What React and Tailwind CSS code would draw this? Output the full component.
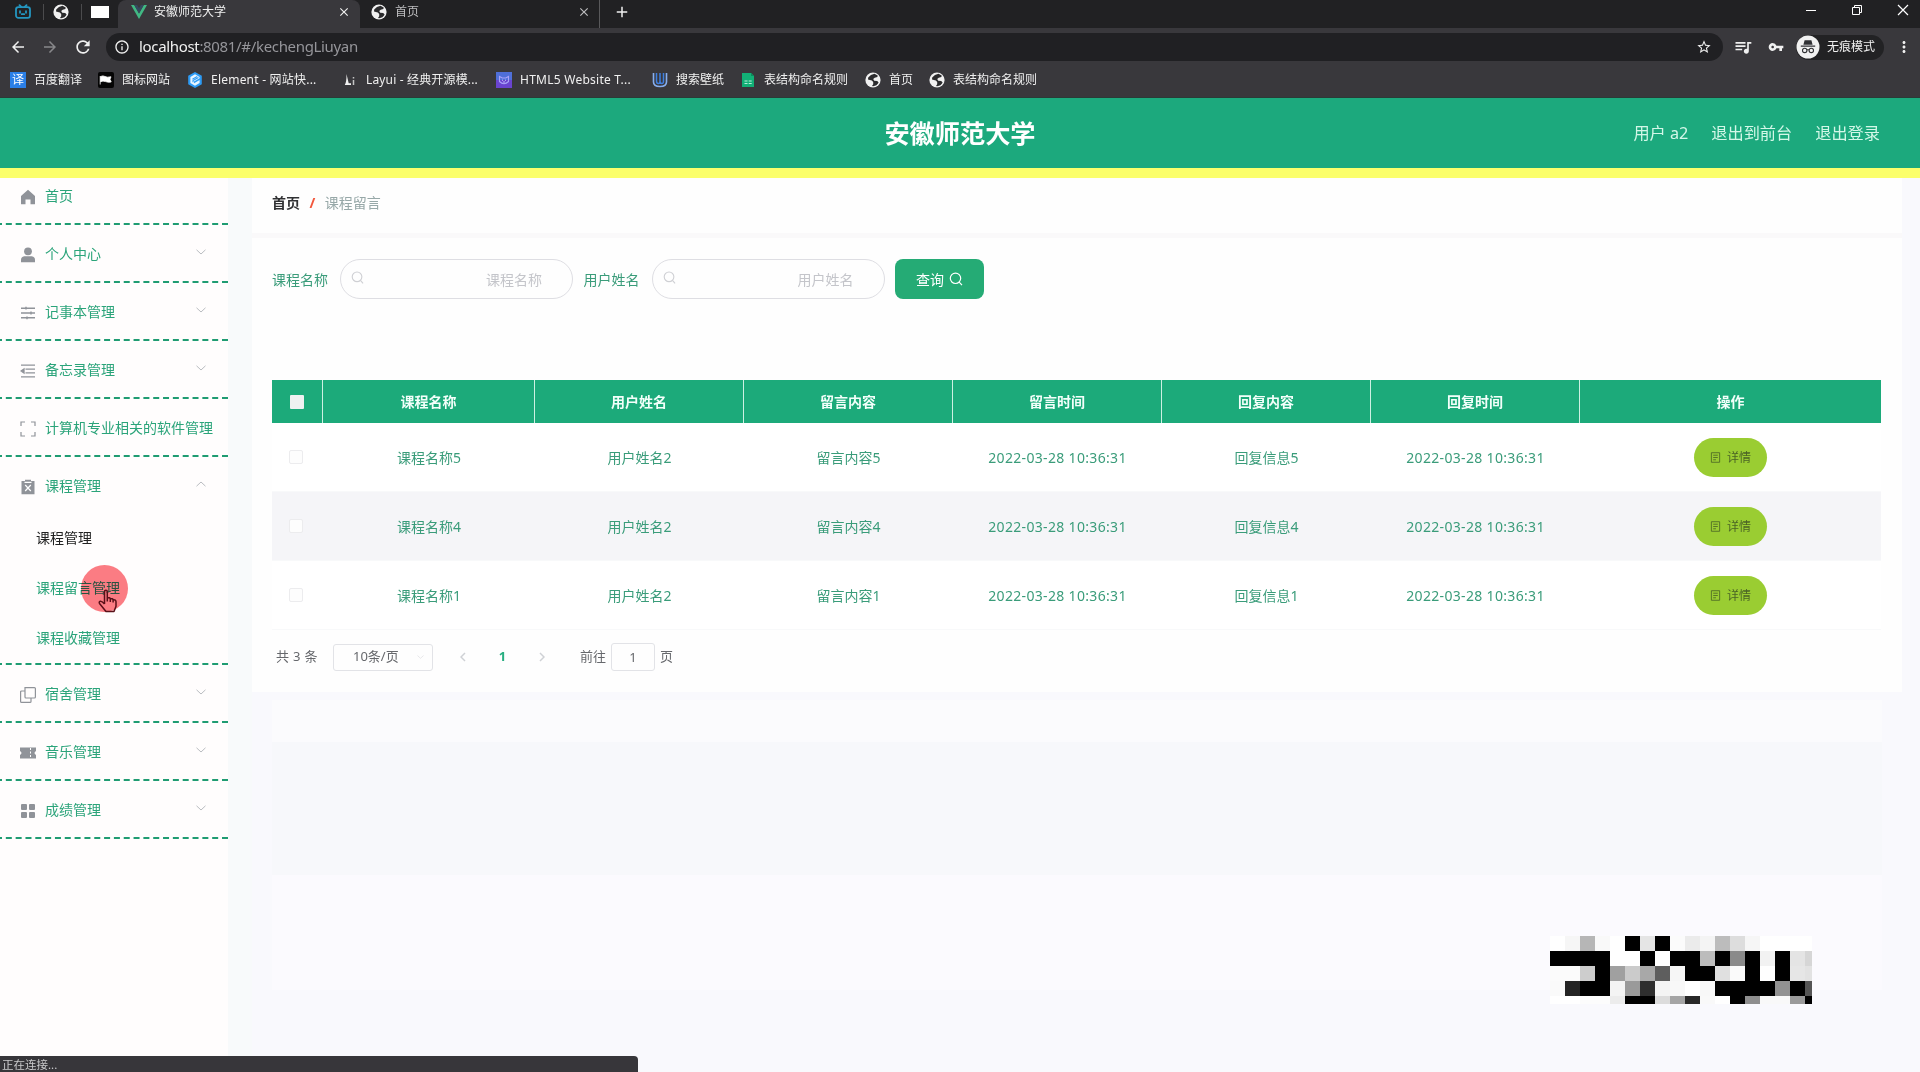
import React from "react";
import {
  MdArrowBack,
  MdArrowForward,
  MdRefresh,
  MdInfoOutline,
  MdStarBorder,
  MdQueueMusic,
  MdVpnKey,
  MdMoreVert,
  MdAdd,
  MdClose,
} from "react-icons/md";

/* ---------- browser icons ---------- */

const Globe = () => (
  <svg viewBox="0 0 16 16" className="size-4 shrink-0">
    <circle cx="8" cy="8" r="7.600" fill="#f1f1f1" />
    <path d="M9.500 1.800Q5.500 2.600 3.200 5.400L3 7.500l3.800.9 1.400 1.600v2.200l-1.200 1.900q4.600.6 6.600-3.500l-1.400-1.700-3-.2-1-1.700 1.500-1.300 2.700-.6.300-1.700z" fill="#2b2b2d" />
  </svg>
);

const Bilibili = () => (
  <svg viewBox="0 0 16 16" className="size-4" fill="none" stroke="#2496c0" strokeWidth="1.8" strokeLinecap="round">
    <path d="M4.500 1.200 6.300 3M11.500 1.200 9.700 3" />
    <rect x="1" y="3.200" width="14" height="10.600" rx="2.400" />
    <path d="M5 7.200v1.600M11 7.200v1.600M6.800 10.200h2.400" />
  </svg>
);

const Vue = () => (
  <svg viewBox="0 0 16 14" className="h-[14px] w-4">
    <path d="M0 0h3.200L8 8.400 12.800 0H16L8 14z" fill="#41b883" />
    <path d="M3.200 0h2.900L8 3.300 9.900 0h2.900L8 8.400z" fill="#35495e" />
  </svg>
);

const Incognito = () => (
  <svg viewBox="0 0 24 24" className="size-6 shrink-0">
    <circle cx="12" cy="12" r="11.500" fill="#f1f1f1" />
    <path d="M8.600 5.300h6.800l1.200 4.400H7.400zM4.800 10.600h14.400v1.100H4.800z" fill="#303134" />
    <circle cx="8.700" cy="15.400" r="2.200" fill="none" stroke="#303134" strokeWidth="1.100" />
    <circle cx="15.300" cy="15.400" r="2.200" fill="none" stroke="#303134" strokeWidth="1.100" />
    <path d="M10.900 15q1.100-.7 2.200 0" fill="none" stroke="#303134" strokeWidth="1" />
  </svg>
);

const FlagMark = () => (
  <svg viewBox="0 0 16 16" className="size-4">
    <rect width="16" height="16" rx="2" fill="#050505" />
    <path d="M2.200 4v8.500M2.600 4.500q2.400-1.200 4.400 0t6 .3l-1 2.500 1.200 2.600q-2.800.8-5.600-.3t-5 .2z" fill="#fff" stroke="#fff" strokeWidth=".8" />
  </svg>
);

const ElementMark = () => (
  <svg viewBox="0 0 16 16" className="size-4">
    <path d="M8 0l6.800 3.800v8.400L8 16 1.200 12.200V3.800z" fill="#2d9bf5" />
    <path d="M8 2.200 12.600 5v1.200L7 9.500v1.700l5.600-3.300V11L8 13.800 3.400 11V5z" fill="#e9f5ff" />
    <path d="M5.400 7.200 10.200 4.600M6 10.200V8.600l5.400-3" fill="none" stroke="#2d9bf5" strokeWidth="1.100" />
  </svg>
);

const LayuiMark = () => (
  <svg viewBox="0 0 16 16" className="size-4">
    <path d="M4.500 2 6.700 11.200H9V13H2.800Q4.600 10 4.500 2z" fill="#f0f0f0" />
    <path d="M11.500 8v5M11.500 5v1.400" stroke="#c4c4c4" strokeWidth="1.500" fill="none" />
  </svg>
);

const HtmlMark = () => (
  <svg viewBox="0 0 16 16" className="size-4">
    <rect width="16" height="8" fill="#4f6fd8" />
    <rect y="8" width="16" height="8" fill="#6a44d0" />
    <path d="M3.500 4.500v5q4.500 4.600 9 0v-5L9.800 6H6.200z" fill="none" stroke="#a9a4f8" strokeWidth="1.100" />
    <path d="M6 8.200h1M9 8.200h1M7.200 10h1.600" stroke="#d6d3ff" strokeWidth="1" />
  </svg>
);

const WallMark = () => (
  <svg viewBox="0 0 16 16" className="size-4" fill="none">
    <path d="M1.500 1v9q0 4.500 6.500 4.500T14.500 10V1" stroke="#86aef0" strokeWidth="1.600" />
    <path d="M4.500 1v8q0 2.500 1.800 2.500T8 9V1M8 9q0 2.500 1.800 2.500T11.500 9V1" stroke="#3f7fe0" strokeWidth="1.500" />
  </svg>
);

const SheetMark = () => (
  <svg viewBox="0 0 16 16" className="size-4">
    <path d="M2 1h9l3 3v11H2z" fill="#12b076" />
    <path d="M11 1l3 3h-3z" fill="#0b8a5a" />
    <path d="M4.500 9h3M8.700 9h3M4.500 11.500h3M8.700 11.500h3" stroke="#b5eeda" strokeWidth="1.200" />
  </svg>
);

const Translate = () => (
  <span className="grid size-4 place-items-center bg-[#2b7fe6] text-[12px] leading-none text-white">译</span>
);

const bookmarks = [
  { icon: <Translate />, text: "百度翻译", box: "w-[88px]" },
  { icon: <FlagMark />, text: "图标网站", box: "w-[89px]" },
  { icon: <ElementMark />, text: "Element - 网站快...", box: "w-[155px] tracking-[0.22px]" },
  { icon: <LayuiMark />, text: "Layui - 经典开源模...", box: "w-[154px] tracking-[0.16px]" },
  { icon: <HtmlMark />, text: "HTML5 Website T...", box: "w-[156px] tracking-[0.25px]" },
  { icon: <WallMark />, text: "搜索壁纸", box: "w-[88px]" },
  { icon: <SheetMark />, text: "表结构命名规则", box: "w-[125px]" },
  { icon: <Globe />, text: "首页", box: "w-16" },
  { icon: <Globe />, text: "表结构命名规则", box: "w-[120px]" },
];

function BrowserChrome() {
  return (
    <div className="h-[98px] shrink-0 border-b border-[#2a3b37] bg-[#39383c] text-[12px] text-[#f0f0f0]">
      <div className="flex h-7 bg-[#212123]">
        <div className="flex w-[118px] items-center pb-1">
          <div className="flex w-11 justify-center border-r border-[#4b4b4d] pl-[3px]"><Bilibili /></div>
          <div className="flex w-[38px] justify-center border-r border-[#4b4b4d] pr-[3px]"><Globe /></div>
          <div className="ml-[9px] h-3 w-[18px] bg-white" />
        </div>
        <div className="flex w-[242px] items-center rounded-t-lg bg-[#39383c] pb-1 pl-[13px]">
          <Vue />
          <span className="ml-[7px] flex-1">安徽师范大学</span>
          <MdClose className="mr-[9px] size-[14px]" />
        </div>
        <div className="flex w-60 items-center border-r border-[#59595b] pb-1 pl-[11px] text-[#bdbdbf]">
          <Globe />
          <span className="ml-2 flex-1">首页</span>
          <MdClose className="mr-[8px] size-[14px]" />
        </div>
        <MdAdd className="mt-[3px] ml-[13px] size-[18px]" />
        <div className="ml-auto flex h-5 items-center gap-[34px] pr-[11px]">
          <svg viewBox="0 0 12 12" className="size-3" stroke="#fff" fill="none"><path d="M1 6.500h10" /></svg>
          <svg viewBox="0 0 12 12" className="size-3" stroke="#fff" fill="none">
            <path d="M1.500 3.500h7v7h-7zM3.500 3.500v-2h7v7h-2" />
          </svg>
          <svg viewBox="0 0 12 12" className="size-3" stroke="#fff" strokeWidth="1.200" fill="none"><path d="M1 1l10 10M11 1L1 11" /></svg>
        </div>
      </div>
      <div className="flex h-[38px] items-center">
        <div className="flex w-[106px] items-center gap-[14px] pl-[9px]">
          <MdArrowBack className="size-[18px]" />
          <MdArrowForward className="size-[18px] text-[#88888b]" />
          <MdRefresh className="size-[20px]" />
        </div>
        <div className="flex h-7 w-[1617px] items-center rounded-full bg-[#202023] pr-[11px] pl-2 text-[15px]">
          <MdInfoOutline className="size-4" />
          <span className="relative -top-px ml-[9px] flex-1 tracking-[-0.33px] text-[#95959a]">
            <span className="text-[#f0f0f0]">localhost</span>:8081/#/kechengLiuyan
          </span>
          <MdStarBorder className="size-4" />
        </div>
        <MdQueueMusic className="ml-[10px] size-5" />
        <MdVpnKey className="ml-[15px] size-4" />
        <div className="ml-3 flex h-[25px] w-[88px] items-center gap-[7px] rounded-full bg-[#222224]">
          <Incognito />
          <span>无痕模式</span>
        </div>
        <MdMoreVert className="ml-[11px] size-[18px]" />
      </div>
      <div className="flex h-7 items-center pl-[10px]">
        {bookmarks.map((b, i) => (
          <div key={i} className={"flex shrink-0 items-center gap-2 whitespace-nowrap " + b.box}>
            {b.icon}
            <span>{b.text}</span>
          </div>
        ))}
      </div>
    </div>
  );
}

/* ---------- side menu ---------- */

const menuIcons = {
  home: <path d="M8 .8 15 7v7.700q0 .5-.5.500h-4V10.500h-5v4.700h-4Q1 15.200 1 14.700V7z" />,
  user: <><circle cx="8" cy="4.300" r="3.900" /><path d="M1 15.200v-2.400q0-3 3.200-3.500h7.600q3.200.5 3.200 3.500v2.400z" /></>,
  operation: (
    <path d="M1 3.200h14M1 8h14M1 12.800h14M6 1.800v2.800M11 6.600v2.800M7 11.400v2.800" fill="none" stroke="currentColor" strokeWidth="1.400" />
  ),
  fold: (
    <path d="M1 2.200h14M5.500 6.200H15M5.500 9.800H15M1 13.800h14M1 8l3-2v4z" stroke="currentColor" strokeWidth="1.300" />
  ),
  full: (
    <path d="M1 5V1h4M11 1h4v4M15 11v4h-4M5 15H1v-4" fill="none" stroke="currentColor" strokeWidth="1.200" />
  ),
  release: (
    <>
      <path d="M1.500 2H5V.7h6V2h3.500v13.300h-13z" />
      <path d="M5.200 6l5.600 6M10.800 6l-5.600 6M4.500 3.300h7" stroke="#fff" strokeWidth="1.200" fill="none" />
    </>
  ),
  copy: (
    <path d="M5 .6h9.400q1 0 1 1V10q0 1-1 1H6q-1 0-1-1zM5 4H1.600q-1 0-1 1v9.400q0 1 1 1H10q1 0 1-1V11" fill="none" stroke="currentColor" strokeWidth="1.200" />
  ),
  ticket: (
    <>
      <path d="M0 2.500h16V6q-3 2 0 4v3.500H0V10q3-2 0-4z" />
      <path d="M10.500 3v10" stroke="#fff" strokeWidth="1" strokeDasharray="2 1.500" />
    </>
  ),
  grid: (
    <>
      <rect x="1" y="1" width="6" height="6" rx="1" /><rect x="9" y="1" width="6" height="6" rx="1" />
      <rect x="1" y="9" width="6" height="6" rx="1" /><rect x="9" y="9" width="6" height="6" rx="1" />
    </>
  ),
};

const Arrow = ({ up }) => (
  <svg viewBox="0 0 10 6" className="mb-[6px] h-[6px] w-[10px]" fill="none" stroke="#b9bcc0">
    <path d={up ? "M.5 5.200 5 1l4.500 4.200" : "M.5.800 5 5 9.500.800"} />
  </svg>
);

function MenuRow({ icon, label, arrow }) {
  return (
    <div className="flex h-14 items-center pt-[3px] pr-[22px] pl-5">
      <svg viewBox="0 0 16 16" className="size-4 shrink-0 text-[#909399]" fill="currentColor">{menuIcons[icon]}</svg>
      <span className="relative -top-px ml-[9px] flex-1 whitespace-nowrap">{label}</span>
      {arrow && <Arrow up={arrow === "up"} />}
    </div>
  );
}

const menu = [
  { icon: "user", label: "个人中心", arrow: "down" },
  { icon: "operation", label: "记事本管理", arrow: "down" },
  { icon: "fold", label: "备忘录管理", arrow: "down" },
  { icon: "full", label: "计算机专业相关的软件管理" },
  { icon: "release", label: "课程管理", arrow: "up", open: true },
  { icon: "copy", label: "宿舍管理", arrow: "down" },
  { icon: "ticket", label: "音乐管理", arrow: "down" },
  { icon: "grid", label: "成绩管理", arrow: "down" },
];

function Sidebar() {
  return (
    <aside className="w-[228px] shrink-0 overflow-hidden bg-[#fffdfd] text-[14px] text-[#2ba47a]">
      <div className="-ml-1 border-b-2 border-dashed border-[#1f9c72] pl-1">
        <div className="-mt-[11px]"><MenuRow icon="home" label="首页" /></div>
      </div>
      {menu.map((m) => (
        <div key={m.label} className="-ml-1 border-b-2 border-dashed border-[#1f9c72] pl-1">
          <MenuRow {...m} />
          {m.open && (
            <div className="relative leading-[50px]">
              <div className="h-[50px] pl-9 text-[#222]">课程管理</div>
              <div className="h-[50px] pl-9">课程留言管理</div>
              <div className="h-[50px] pl-9">课程收藏管理</div>
              <div className="absolute top-[52px] left-[81px] size-[47px] rounded-full bg-[#fb7d84] mix-blend-multiply" />
              <svg viewBox="0 0 20 24" className="absolute top-[76px] left-[98px] h-6 w-5" fill="none" stroke="#5a1018" strokeWidth="1.500" strokeLinejoin="round">
                <path d="M6.500 15V2.800q0-1.500 1.400-1.500t1.400 1.500V9q2.600-.8 3 .8 2.400-.6 2.800 1 2.900-.5 2.900 2v4.500l-2 5.200H8L1.500 14.500q-.8-1.800.8-2.200 1.500-.2 4.200 2.700M9.300 9v3.500M12.300 10v3M15.100 11v2.500" />
              </svg>
            </div>
          )}
        </div>
      ))}
    </aside>
  );
}

/* ---------- content ---------- */

const SearchIcon = ({ className }) => (
  <svg viewBox="0 0 14 14" className={className} fill="none" stroke="currentColor" strokeWidth="1.200">
    <circle cx="6.500" cy="6.300" r="5.200" /><path d="M10.200 10.200 13 13.200" />
  </svg>
);

const Field = ({ label }) => (
  <>
    <span className="w-[68px]">{label}</span>
    <div className="mr-[10.500px] flex h-10 w-[233px] items-center justify-between rounded-full border border-[#dedee3] pr-[30px] pl-[10px] text-[#c4c5ca]">
      <SearchIcon className="mb-[3px] size-[13px] text-[#cfd0d4]" />
      <span>{label}</span>
    </div>
  </>
);

const cols = "grid grid-cols-[51px_212px_209px_209px_209px_209px_209px_301px]";
const heads = ["课程名称", "用户姓名", "留言内容", "留言时间", "回复内容", "回复时间"];
const rows = ["5", "4", "1"];
const time = "2022-03-28 10:36:31";

function DataTable() {
  return (
    <div className="mt-[81px] w-[1609px] text-center text-[14px] text-[#3a9c7a]">
      <div className={cols + " h-[43px] items-stretch bg-[#1caa7a] leading-[43px] font-bold text-[#f2fffa]"}>
        <div className="grid place-items-center border-r border-[#cdf0e2]"><div className="size-[14px] rounded-[1px] bg-[#eef1f1]" /></div>
        {heads.map((h) => <div key={h} className="border-r border-[#cdf0e2]">{h}</div>)}
        <div>操作</div>
      </div>
      {rows.map((n) => (
        <div key={n} className={cols + " h-[69px] items-center border-b border-[#f8f9fa] " + (n === "4" ? "bg-[#f5f5f8]" : "bg-white")}>
          <div className="mr-[4px] size-[14px] justify-self-center rounded-[2px] border border-[#ececee] bg-[#fdfdfd]" />
          <div>课程名称{n}</div>
          <div>用户姓名2</div>
          <div>留言内容{n}</div>
          <div className="tracking-[0.33px]">{time}</div>
          <div>回复信息{n}</div>
          <div className="tracking-[0.33px]">{time}</div>
          <div className="flex h-[39px] w-[73px] items-center justify-center gap-[6px] justify-self-center rounded-[20px] bg-[#9acd32] pt-px text-[12px] text-[#4a6325]">
            <svg viewBox="0 0 12 12" className="size-[11px]" fill="none" stroke="currentColor" strokeWidth=".9">
              <path d="M1.500.800h9v10.400h-9zM3.500 3.500h5M3.500 6h5M3.500 8.500h3" />
            </svg>
            <span>详情</span>
          </div>
        </div>
      ))}
    </div>
  );
}

function Pagination() {
  return (
    <div className="mt-[13px] flex h-7 items-center pl-1 text-[13px] text-[#66686c]">
      <span className="w-[57px] tracking-[0.3px]">共 3 条</span>
      <div className="flex h-[27px] w-[100px] items-center justify-between rounded-[3px] border border-[#e2e3e7] pr-2 pl-[19px]">
        <span>10条/页</span>
        <svg viewBox="0 0 10 6" className="h-[4px] w-[7px]" fill="none" stroke="#dcdde1"><path d="M.5.800 5 5 9.500.800" /></svg>
      </div>
      <svg viewBox="0 0 6 10" className="ml-[27px] h-[10px] w-[6px]" fill="none" stroke="#cfd1d5" strokeWidth="1.500"><path d="M5 1 1 5l4 4" /></svg>
      <span className="w-[73px] text-center font-bold text-[#27ae80]">1</span>
      <svg viewBox="0 0 6 10" className="h-[10px] w-[6px]" fill="none" stroke="#cfd1d5" strokeWidth="1.500"><path d="m1 1 4 4-4 4" /></svg>
      <span className="ml-[35px]">前往</span>
      <div className="mx-[5px] h-7 w-[44px] rounded-[3px] border border-[#e2e3e7] text-center leading-[26px]">1</div>
      <span>页</span>
    </div>
  );
}

/* Grey value of every mosaic cell, one array per row. */
const mosaic = [
  [255, 246, 182, 249, 255, 0, 229, 0, 251, 235, 244, 188, 221, 246, 255, 255, 255, 255],
  [0, 0, 0, 0, 255, 255, 0, 255, 0, 0, 188, 0, 138, 0, 242, 0, 228, 214],
  [251, 251, 205, 0, 160, 203, 168, 94, 246, 0, 0, 224, 250, 0, 255, 0, 230, 226],
  [250, 36, 0, 0, 244, 154, 46, 244, 248, 255, 248, 0, 0, 0, 0, 146, 0, 85],
  [255, 255, 252, 252, 236, 0, 0, 220, 165, 40, 249, 255, 0, 142, 249, 249, 154, 0],
];

function Mosaic() {
  return (
    <div className="absolute top-[936px] left-[1550px] grid h-[68px] w-[262px] grid-cols-[repeat(17,15px)_7px] grid-rows-[repeat(4,15px)_8px]">
      {mosaic.flat().map((v, i) => (
        <div key={i} style={{ backgroundColor: `rgb(${v},${v},${v})` }} />
      ))}
    </div>
  );
}

export default function App() {
  return (
    <div className="relative flex h-[1072px] w-[1920px] flex-col overflow-hidden bg-[#f9f9fd] font-['Noto_Sans','Noto_Sans_CJK_SC',sans-serif]">
      <BrowserChrome />
      <header className="grid h-20 shrink-0 grid-cols-3 items-center border-b-10 border-[#fbff6b] bg-[#1ca97d] pr-10">
        <span />
        <h1 className="pt-px pl-10 text-center text-[25.200px] font-bold text-white">安徽师范大学</h1>
        <nav className="flex justify-end gap-[23px] pt-px text-[16.200px] text-[#d3f7e8]">
          <span>用户 a2</span>
          <span>退出到前台</span>
          <span>退出登录</span>
        </nav>
      </header>
      <div className="flex flex-1">
        <Sidebar />
        <div className="w-6 shrink-0 bg-[#f8fafb]" />
        <main className="w-[1650px]">
          <div className="flex h-[55px] items-center bg-[#fefefe] pb-[7px] pl-5 text-[14px]">
            <span className="font-bold text-[#303133]">首页</span>
            <span className="mx-[9.500px] font-bold text-[#f2563c]">/</span>
            <span className="text-[#97a8a8]">课程留言</span>
          </div>
          <div className="h-[5px] bg-[#faf9fa]" />
          <section className="h-[454px] bg-[#fefefe] pt-[21px] pl-5">
            <div className="flex h-10 items-center text-[14px] text-[#3a9c7a]">
              <Field label="课程名称" />
              <Field label="用户姓名" />
              <div className="flex h-10 w-[89px] items-center justify-center gap-[5px] rounded-lg bg-[#25ab75] text-white">
                <span>查询</span>
                <SearchIcon className="size-[14px]" />
              </div>
            </div>
            <DataTable />
            <Pagination />
          </section>
          <div className="mx-5 mt-2 h-[42px] bg-[#fbfbfd]" />
          <div className="mx-5 h-[133px] bg-[#f7f8fb]" />
          <div className="mx-5 h-[115px] bg-[#fbfafe]" />
        </main>
      </div>
      <Mosaic />
      <div className="absolute bottom-0 left-0 flex h-4 w-[638px] items-end rounded-tr bg-[#37363a] pl-[2px] text-[11.500px] leading-[14px] text-[#c9c9cb]">
        正在连接...
      </div>
    </div>
  );
}
